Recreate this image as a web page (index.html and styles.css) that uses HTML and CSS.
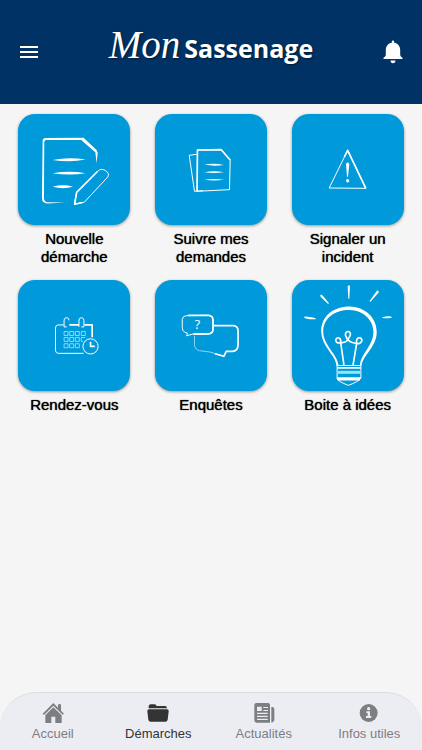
FILE: index.html
```html
<!DOCTYPE html>
<html lang="fr">
<head>
  <meta charset="UTF-8">
  <meta name="viewport" content="width=device-width, initial-scale=1.0">
  <title>Mon Sassenage</title>
  <link rel="stylesheet" href="styles.css">
</head>
<body>
  <header class="header">
    <button type="button" class="icon-btn" aria-label="Menu">
      <svg viewBox="0 0 24 24" fill="#fff"><path d="M3 6h18v2H3zM3 11h18v2H3zM3 16h18v2H3z"/></svg>
    </button>
    <h1 class="logo"><span class="logo-script">Mon</span><span class="logo-name">Sassenage</span></h1>
    <button type="button" class="icon-btn" aria-label="Notifications">
      <svg viewBox="0 0 24 24" fill="#fff"><path d="M12 .5c.8 0 1.200.6 1.200 1.400v.8c3.700.6 6 3.500 6 7.300v4.500c0 1.500.6 2.300 2.300 3.200v1.300h-19v-1.300c1.700-.9 2.300-1.700 2.300-3.200V10c0-3.800 2.300-6.700 6-7.300v-.8c0-.8.4-1.400 1.200-1.400zM9.500 20.500h5c0 1.500-1 2.700-2.500 2.700s-2.500-1.200-2.500-2.700z"/></svg>
    </button>
  </header>

  <main class="services">
    <a href="#" class="service">
      <span class="tile">
        <svg viewBox="25 18 336 336">
          <path d="M98 100Q98 92 106 91L222 90L262 128L261 137L220 101L215 97L108 97Q103 98 103 105L102 272Q103 283 112 285L166 286L112 289Q97 288 96 274Z" fill="#fff"/>
          <path d="M261 128L265 135L261 168L258 135Z" fill="#fff"/>
          <path d="M128 157Q178 148 228 156Q180 165 128 157zM128 197Q178 188 228 197Q180 206 128 197zM128 238Q160 230 190 238Q160 247 128 238z" fill="#fff"/>
          <path d="M194 291L201 255L264 192Q275 181 288 189Q302 198 295 209L224 285Z" class="line"/>
          <path d="M264 192L201 255L195 291L218 286" class="line thick"/>
        </svg>
      </span>
      <span class="service-label">Nouvelle<br>démarche</span>
    </a>
    <a href="#" class="service">
      <span class="tile">
        <svg viewBox="-75 -72 336 336">
          <path d="M51 162L52 37L124 36L151 67L149 157Z" class="line"/>
          <path d="M51 162L52 37L124 36L151 67" class="line thick"/>
          <path d="M50 50L27 53L43 162L69 160" class="line"/>
          <path d="M73 81Q102 76 132 82Q102 87 73 81zM73 104Q102 98 132 104Q102 109 73 104zM73 127Q102 122 132 127Q102 132 73 127z" fill="#fff"/>
        </svg>
      </span>
      <span class="service-label">Suivre mes<br>demandes</span>
    </a>
    <a href="#" class="service">
      <span class="tile">
        <svg viewBox="20 18 336 336">
          <path d="M131 242L187 128L242 243Z" class="line"/>
          <path d="M177 148L187 128L242 243" class="line thick"/>
          <path d="M182 169Q187 161 192 169L188 208H185z" fill="#fff"/>
          <circle cx="187" cy="220" r="5" fill="#fff"/>
        </svg>
      </span>
      <span class="service-label">Signaler un<br>incident</span>
    </a>
    <a href="#" class="service">
      <span class="tile">
        <svg viewBox="25 15 336 336">
          <path d="M162 151H144Q137 152 137 160V229Q138 237 146 237H222" class="line"/>
          <path d="M179 151H208M225 151H248V188" class="line thick"/>
          <path d="M163 157V136Q164 129 171 129Q178 130 178 137M208 157V136Q209 129 216 129Q223 130 223 137V157H215M171 157H163" class="line"/>
          <path d="M163 171h12v12h-12zM180 171h12v12h-12zM197 171h12v12h-12zM215 171h12v12h-12zM163 189h12v12h-12zM180 189h12v12h-12zM197 189h12v12h-12zM227 189h-12v12h5M163 208h12v12h-12zM180 208h12v12h-12zM197 208h12v12h-12z" class="line faint"/>
          <circle cx="243" cy="216" r="23" class="line"/>
          <path d="M243 202V216H256" class="line thick"/>
        </svg>
      </span>
      <span class="service-label">Rendez-vous</span>
    </a>
    <a href="#" class="service">
      <span class="tile">
        <svg viewBox="15 15 336 336">
          <path d="M103 173Q96 169 96 158V134Q97 124 108 123L177 122Q189 124 189 136V166Q188 177 176 178L130 178L109 184L112 176Z" class="line"/>
          <path d="M114 122L177 122Q189 124 189 136V166Q188 177 176 178L130 179" class="line thick"/>
          <path d="M133 184V211Q134 225 148 229L180 233L222 246" class="line faint"/>
          <path d="M192 153H252Q265 155 265 169V213Q264 230 248 231H229L222 246L195 238" class="line thick"/>
          <text x="142" y="164" class="question">?</text>
        </svg>
      </span>
      <span class="service-label">Enquêtes</span>
    </a>
    <a href="#" class="service">
      <span class="tile">
        <svg viewBox="20 15 336 336">
          <path fill-rule="evenodd" d="M153 275C153 245 108 217 107 171C106 123 146 95 192 95C239 96 276 128 275 174C274 219 231 245 229 275ZM159 272H224C226 240 264 214 265 174C265 134 233 107 193 106C151 105 113 129 113 171C113 213 156 240 159 272Z" fill="#fff"/>
          <path d="M176 274L166 205Q151 208 151 196Q154 187 162 191Q168 196 165 204Q184 207 191 189Q200 178 191 171Q181 170 180 181Q186 205 214 207Q226 210 230 199Q230 189 220 190Q212 194 214 208L203 274" class="line thick"/>
          <path d="M155 275V314Q158 322 189 334Q221 322 227 312V275" class="line"/>
          <path d="M155 281H227M155 312H227M157 317H224" class="line thick"/>
          <path d="M156 290H226V299H156z" fill="#8de7fa"/>
          <path d="M187 34Q191 28 194 34L192 72H189zM104 60Q107 58 112 63L131 86L127 87L105 66zM276 47Q282 47 281 53L256 81L253 79zM54 127Q60 123 90 131V134Q58 135 54 127zM292 128Q315 121 322 128Q316 133 292 130z" fill="#fff"/>
        </svg>
      </span>
      <span class="service-label">Boite à idées</span>
    </a>
  </main>

  <nav class="tabbar">
    <a href="#" class="tab">
      <svg viewBox="122 48 72 72" fill="currentColor">
        <path d="M127 86L159 54L173 68V58H182V77L191 86L187 89L159 62L131 90Z"/>
        <path d="M135 91L159 67L184 91V114H165V95H153V114H135Z"/>
      </svg>
      <span>Accueil</span>
    </a>
    <a href="#" class="tab active">
      <svg viewBox="439 48 72 72" fill="currentColor">
        <path d="M447 70V63Q448 58 453 58H465Q469 59 471 63H497Q502 64 502 70Z"/>
        <path d="M447 73H503Q508 74 507 79L504 104Q503 110 497 110H453Q447 110 446 104L443 79Q443 74 447 73Z"/>
      </svg>
      <span>Démarches</span>
    </a>
    <a href="#" class="tab">
      <svg viewBox="122 48 72 72">
        <path d="M134 54H171Q176 55 176 60V113H135Q129 112 129 106V60Q129 55 134 54ZM180 66H184Q189 67 189 72V106Q188 112 180 113Z" fill="currentColor"/>
        <path d="M137 65H151V78H137zM156 66H170V69H156zM156 75H170V78H156zM137 83H169V87H137zM137 92H169V96H137zM137 101H169V105H137z" fill="#ecedf3"/>
      </svg>
      <span>Actualités</span>
    </a>
    <a href="#" class="tab">
      <svg viewBox="439 48 72 72">
        <circle cx="474" cy="84" r="27" fill="currentColor"/>
        <circle cx="474" cy="71" r="5" fill="#ecedf3"/>
        <path d="M467 79H478V93H482V99H466V93H471V84H467Z" fill="#ecedf3"/>
      </svg>
      <span>Infos utiles</span>
    </a>
  </nav>
</body>
</html>
```
FILE: styles.css
```css
* {
  box-sizing: border-box;
}
body {
  margin: 0;
  min-height: 100vh;
  display: flex;
  flex-direction: column;
  background-color: #f5f5f5;
  font-family: "Liberation Sans", Arial, sans-serif;
  color: #000;
}
a {
  color: inherit;
  text-decoration: none;
}
.header {
  display: flex;
  justify-content: space-between;
  align-items: center;
  height: 104px;
  padding: 0 17px;
  background-color: #003265;
}
.icon-btn {
  width: 24px;
  height: 24px;
  padding: 0;
  border: none;
  background: none;
  cursor: pointer;
}
.icon-btn svg {
  display: block;
}
.logo {
  display: flex;
  align-items: baseline;
  gap: 4px;
  margin: 0;
  padding-bottom: 12px;
  color: #fff;
  line-height: 48px;
  text-shadow: 1px 1px 2px rgba(0, 0, 0, 0.5);
}
.logo-script {
  font-family: "Liberation Serif", serif;
  font-size: 39px;
  font-style: italic;
  font-weight: normal;
}
.logo-name {
  font-family: "Open Sans", sans-serif;
  font-size: 25px;
}
.services {
  flex: 1;
  display: grid;
  grid-template-columns: repeat(3, 1fr);
  align-content: start;
  row-gap: 14px;
  padding: 10px 6px;
}
.service {
  display: flex;
  flex-direction: column;
  align-items: center;
  gap: 5px;
}
.tile {
  width: 112px;
  height: 111px;
  border-radius: 17px;
  background-color: #0099d9;
  box-shadow: 0 1px 3px rgba(0, 0, 0, 0.4);
}
.tile svg {
  display: block;
  width: 100%;
  height: 100%;
}
.line {
  fill: none;
  stroke: #fff;
  stroke-width: 3;
  stroke-linejoin: round;
}
.thick {
  stroke-width: 5;
}
.faint {
  stroke: #8fd8f5;
}
.question {
  fill: #fff;
  font-family: "Open Sans", sans-serif;
  font-size: 40px;
  text-anchor: middle;
}
.service-label {
  font-size: 15px;
  line-height: 18px;
  text-align: center;
  text-shadow: 0 0 1px #000;
}
.tabbar {
  display: grid;
  grid-template-columns: repeat(4, 1fr);
  height: 58px;
  padding-top: 8px;
  border-top: 1px solid #dcdde4;
  border-radius: 36px 36px 0 0;
  background-color: #ecedf3;
}
.tab {
  display: flex;
  flex-direction: column;
  align-items: center;
  color: #7d7e82;
  font-size: 13px;
  line-height: 18px;
}
.tab svg {
  width: 24px;
  height: 24px;
}
.tab.active {
  color: #333;
}
```
